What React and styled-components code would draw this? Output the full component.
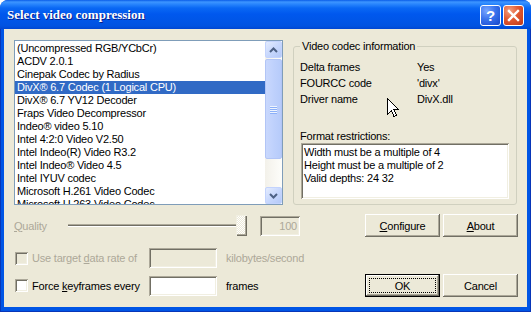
import React from 'react';
import styled, { createGlobalStyle } from 'styled-components';

const Global = createGlobalStyle`
  html, body { margin: 0; padding: 0; background: #ffffff; }
  body { font-family: "Liberation Sans", Arial, sans-serif; font-size: 11px; color: #000; letter-spacing: -0.2px; }
  #root { width: 531px; height: 312px; }
  * { box-sizing: border-box; }
`;

const Window = styled.div`
  width: 531px;
  height: 312px;
  display: flex;
  flex-direction: column;
  background: #0054e3;
  border-radius: 8px 8px 0 0;
  overflow: hidden;
`;

const TitleBar = styled.div`
  height: 29px;
  flex: none;
  display: flex;
  align-items: center;
  padding: 1px 7px 0 7px;
  background: linear-gradient(
    #0a5ce8 0px, #3d95ff 2px, #2a86fd 4px, #0a68f4 8px,
    #0058ee 14px, #0055e6 22px, #0053e1 26px, #0046d2 29px
  );
`;

const Title = styled.div`
  flex: 1;
  font-family: "Liberation Serif", "Times New Roman", serif;
  font-weight: bold;
  font-size: 13px;
  color: #ffffff;
  text-shadow: 1px 1px #0a1d8a;
  letter-spacing: 0;
`;

const CaptionButtons = styled.div`
  display: flex;
  gap: 2px;
`;

const CaptionButton = styled.div`
  width: 21px;
  height: 21px;
  border: 1px solid #ffffff;
  border-radius: 3px;
  display: flex;
  align-items: center;
  justify-content: center;
  color: #ffffff;
  font-weight: bold;
  font-size: 15px;
  letter-spacing: 0;
  font-family: "Liberation Sans", Arial, sans-serif;
  background: ${(p) =>
    p.$kind === 'close'
      ? 'radial-gradient(circle at 30% 25%, #f3a080 0%, #e25a33 45%, #cc4421 80%, #b8391a 100%)'
      : 'radial-gradient(circle at 30% 25%, #79a6ff 0%, #3a73ec 45%, #2256d8 80%, #1a47c2 100%)'};
`;

const Frame = styled.div`
  flex: 1;
  display: flex;
  padding: 0 3px 4px 3px;
  border: 1px solid #0836b8;
  border-top: none;
  background: #0055e5;
`;

const Client = styled.div`
  flex: 1;
  background: #ece9d8;
  padding: 11px 9px 0 10px;
  display: flex;
  flex-direction: column;
`;

const TopRow = styled.div`
  display: flex;
  gap: 10px;
  height: 165px;
  margin-right: 1px;
`;

const ListBox = styled.div`
  width: 269px;
  border: 1px solid #7f9db9;
  background: #ffffff;
  display: flex;
`;

const Items = styled.div`
  flex: 1;
  overflow: hidden;
  padding-top: 1px;
`;

const Item = styled.div`
  height: 13px;
  line-height: 13px;
  padding-left: 2px;
  white-space: nowrap;
  background: ${(p) => (p.$selected ? '#316ac5' : 'transparent')};
  color: ${(p) => (p.$selected ? '#ffffff' : '#000000')};
`;

const ScrollBar = styled.div`
  width: 17px;
  display: flex;
  flex-direction: column;
  background: linear-gradient(to right, #f3f1ea, #fdfdfa);
`;

const ScrollButton = styled.div`
  height: 17px;
  flex: none;
  border: 1px solid #c3d3fd;
  border-radius: 2px;
  background: linear-gradient(135deg, #e4ecfe 0%, #c8d8fd 50%, #b4c9f8 100%);
  display: flex;
  align-items: center;
  justify-content: center;
  margin-top: ${(p) => (p.$bottom ? 'auto' : '0')};
`;

const Thumb = styled.div`
  height: 100px;
  margin-top: 1px;
  border: 1px solid #b2c5f6;
  border-radius: 2px;
  background: linear-gradient(to right, #c9d8fd 0%, #bfd1fc 50%, #b6cbfa 100%);
  display: flex;
  flex-direction: column;
  align-items: center;
  justify-content: center;
  gap: 1px;
`;

const Grip = styled.div`
  width: 7px;
  height: 1px;
  background: #eef4fe;
  box-shadow: 0 1px #8cb0f8;
`;

const Group = styled.fieldset`
  flex: 1;
  min-width: 0;
  margin: 0;
  border: 1px solid #d0d0bf;
  border-radius: 3px;
  padding: 6px 7px 5px 6px;
  display: flex;
  flex-direction: column;
`;

const Legend = styled.legend`
  padding: 0 2px;
  line-height: 13px;
  font-size: 11px;
`;

const InfoGrid = styled.div`
  position: relative;
  display: grid;
  grid-template-columns: 117px 1fr;
  grid-auto-rows: 16px;
  align-items: center;
`;

const Cursor = styled.svg`
  position: absolute;
  left: 87px;
  top: 39px;
`;

const FieldLabel = styled.div`
  margin-top: 23px;
  line-height: 13px;
`;

const sunken = `
  box-shadow: inset 1px 1px #aca899, inset -1px -1px #ffffff,
    inset 2px 2px #716f64, inset -2px -2px #f1efe2;
`;

const Memo = styled.div`
  height: 56px;
  width: 208px;
  margin-left: 1px;
  background: #ffffff;
  ${sunken}
  padding: 3px 2px 0 3px;
  line-height: 13px;
`;

const Lower = styled.div`
  margin-top: 9px;
  display: grid;
  grid-template-columns: 1fr 75px 75px;
  grid-template-rows: 23px 32px 28px;
  column-gap: 3px;
`;

const ControlRow = styled.div`
  grid-column: 1;
  grid-row: ${(p) => p.$row};
  display: flex;
  align-items: center;
  align-self: ${(p) => p.$align || 'stretch'};
  height: ${(p) => p.$h || '23px'};
`;

const Text = styled.span`
  color: ${(p) => (p.$disabled ? '#aca899' : '#000000')};
  white-space: nowrap;
  width: ${(p) => p.$w || 'auto'};
  margin-left: ${(p) => p.$ml || '0'};
  flex: none;
`;

const Slider = styled.div`
  width: 179px;
  height: 23px;
  display: flex;
  align-items: center;
`;

const Track = styled.div`
  flex: 1;
  height: 3px;
  border-top: 1px solid #aca899;
  border-bottom: 1px solid #ffffff;
  background: #716f64;
`;

const SliderThumb = styled.div`
  width: 11px;
  height: 21px;
  background: repeating-conic-gradient(#ffffff 0 25%, #ece9d8 0 50%) 0 0 / 2px 2px;
  box-shadow: inset 1px 1px #f1efe2, inset -1px -1px #716f64, inset -2px -2px #aca899;
`;

const Edit = styled.div`
  width: ${(p) => p.$w};
  height: 20px;
  margin-left: ${(p) => p.$ml || '0'};
  background: ${(p) => (p.$disabled ? '#ece9d8' : '#ffffff')};
  ${sunken}
  color: #aca899;
  text-align: right;
  line-height: 20px;
  padding-right: 3px;
  flex: none;
`;

const CheckLabel = styled.div`
  width: 135px;
  display: flex;
  align-items: center;
  gap: 4px;
  flex: none;
`;

const CheckBox = styled.div`
  width: 13px;
  height: 13px;
  margin-left: 1px;
  background: ${(p) => (p.$disabled ? '#ece9d8' : '#ffffff')};
  ${sunken}
`;

const Button = styled.button`
  grid-row: ${(p) => p.$row};
  grid-column: ${(p) => p.$col};
  align-self: end;
  width: 75px;
  height: 23px;
  padding: 0;
  margin: 0;
  font-family: "Liberation Sans", Arial, sans-serif;
  font-size: 11px;
  letter-spacing: -0.2px;
  color: #000000;
  background: #ece9d8;
  border: ${(p) => (p.$default ? '1px solid #000000' : 'none')};
  box-shadow: inset -1px -1px #716f64, inset 1px 1px #ffffff, inset -2px -2px #aca899;
  outline: ${(p) => (p.$focus ? '1px dotted #000000' : 'none')};
  outline-offset: -5px;
`;

const Accel = styled.u`
  text-decoration: underline;
  text-underline-offset: 1px;
`;

const codecs = [
  '(Uncompressed RGB/YCbCr)',
  'ACDV 2.0.1',
  'Cinepak Codec by Radius',
  'DivX® 6.7 Codec (1 Logical CPU)',
  'DivX® 6.7 YV12 Decoder',
  'Fraps Video Decompressor',
  'Indeo® video 5.10',
  'Intel 4:2:0 Video V2.50',
  'Intel Indeo(R) Video R3.2',
  'Intel Indeo® Video 4.5',
  'Intel IYUV codec',
  'Microsoft H.261 Video Codec',
  'Microsoft H.263 Video Codec',
];

const Chevron = ({ up }) => (
  <svg width="9" height="6" viewBox="0 0 9 6">
    <polyline
      points={up ? '1,5 4.5,1.5 8,5' : '1,1 4.5,4.5 8,1'}
      fill="none"
      stroke="#4d6185"
      strokeWidth="2"
    />
  </svg>
);

export default function App() {
  return (
    <>
      <Global />
      <Window>
        <TitleBar>
          <Title>Select video compression</Title>
          <CaptionButtons>
            <CaptionButton $kind="help">?</CaptionButton>
            <CaptionButton $kind="close">
              <svg width="13" height="13" viewBox="0 0 13 13">
                <path d="M2 2 L11 11 M11 2 L2 11" stroke="#ffffff" strokeWidth="2.4" strokeLinecap="square" />
              </svg>
            </CaptionButton>
          </CaptionButtons>
        </TitleBar>
        <Frame>
          <Client>
            <TopRow>
              <ListBox>
                <Items>
                  {codecs.map((c, i) => (
                    <Item key={c} $selected={i === 3}>{c}</Item>
                  ))}
                </Items>
                <ScrollBar>
                  <ScrollButton><Chevron up /></ScrollButton>
                  <Thumb>
                    <Grip /><Grip /><Grip /><Grip />
                  </Thumb>
                  <ScrollButton $bottom><Chevron /></ScrollButton>
                </ScrollBar>
              </ListBox>
              <Group>
                <Legend>Video codec information</Legend>
                <InfoGrid>
                  <span>Delta frames</span><span>Yes</span>
                  <span>FOURCC code</span><span>'divx'</span>
                  <span>Driver name</span><span>DivX.dll</span>
                  <Cursor width="13" height="20" viewBox="0 0 13 20" shapeRendering="crispEdges">
                    <path
                      d="M0.5 0.5 L0.5 16.5 L4.5 12.5 L7 18.5 L9.5 17.5 L7 11.5 L11.5 11.5 Z"
                      fill="#ffffff"
                      stroke="#000000"
                      strokeWidth="1"
                    />
                  </Cursor>
                </InfoGrid>
                <FieldLabel>Format restrictions:</FieldLabel>
                <Memo>
                  Width must be a multiple of 4<br />
                  Height must be a multiple of 2<br />
                  Valid depths: 24 32
                </Memo>
              </Group>
            </TopRow>
            <Lower>
              <ControlRow $row={1}>
                <Text $disabled $w="54px"><Accel>Q</Accel>uality</Text>
                <Slider>
                  <Track />
                  <SliderThumb />
                </Slider>
                <Edit $w="40px" $ml="13px" $disabled>100</Edit>
              </ControlRow>
              <Button $row={1} $col={2}><Accel>C</Accel>onfigure</Button>
              <Button $row={1} $col={3}><Accel>A</Accel>bout</Button>
              <ControlRow $row={2} $align="end" $h="22px">
                <CheckLabel>
                  <CheckBox $disabled />
                  <Text $disabled>Use target <Accel>d</Accel>ata rate of</Text>
                </CheckLabel>
                <Edit $w="68px" $disabled />
                <Text $disabled $ml="9px">kilobytes/second</Text>
              </ControlRow>
              <ControlRow $row={3} $align="end" $h="23px">
                <CheckLabel>
                  <CheckBox />
                  <Text>Force <Accel>k</Accel>eyframes every</Text>
                </CheckLabel>
                <Edit $w="68px" />
                <Text $ml="9px">frames</Text>
              </ControlRow>
              <Button $row={3} $col={2} $default $focus>OK</Button>
              <Button $row={3} $col={3}>Cancel</Button>
            </Lower>
          </Client>
        </Frame>
      </Window>
    </>
  );
}
